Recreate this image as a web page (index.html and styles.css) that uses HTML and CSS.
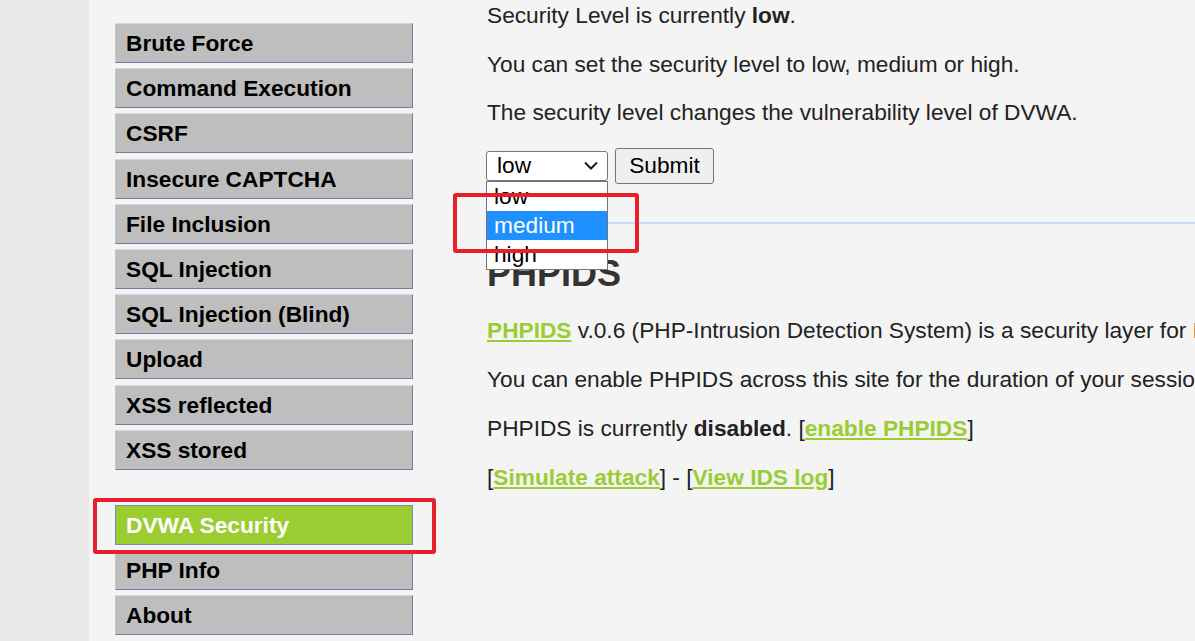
FILE: index.html
```html
<!DOCTYPE html>
<html lang="en">
<head>
<meta charset="utf-8">
<title>DVWA Security</title>
<link rel="stylesheet" href="styles.css">
</head>
<body>
<div class="page">
  <div class="strip"></div>
  <nav class="menu">
    <ul class="menu-group">
      <li class="menu-item">Brute Force</li>
      <li class="menu-item">Command Execution</li>
      <li class="menu-item">CSRF</li>
      <li class="menu-item">Insecure CAPTCHA</li>
      <li class="menu-item">File Inclusion</li>
      <li class="menu-item">SQL Injection</li>
      <li class="menu-item">SQL Injection (Blind)</li>
      <li class="menu-item">Upload</li>
      <li class="menu-item">XSS reflected</li>
      <li class="menu-item">XSS stored</li>
    </ul>
    <ul class="menu-group">
      <li class="menu-item selected">DVWA Security</li>
      <li class="menu-item">PHP Info</li>
      <li class="menu-item">About</li>
    </ul>
  </nav>
  <main class="content">
    <section class="level">
      <p>Security Level is currently <b>low</b>.</p>
      <p>You can set the security level to low, medium or high.</p>
      <p>The security level changes the vulnerability level of DVWA.</p>
      <form class="level-form">
        <div class="select">
          <span>low</span>
          <svg class="chevron" width="14" height="9" viewBox="0 0 14 9"><polyline points="1,1.5 7,7.5 13,1.5" fill="none" stroke="#1a1a1a" stroke-width="2"/></svg>
          <ul class="options">
            <li class="option">low</li>
            <li class="option active">medium</li>
            <li class="option">high</li>
          </ul>
        </div>
        <button type="button" class="submit">Submit</button>
      </form>
    </section>
    <hr class="rule">
    <section class="ids">
      <h2 class="title">PHPIDS</h2>
      <p><a class="link">PHPIDS</a> v.0.6 (PHP-Intrusion Detection System) is a security layer for PHP based web applications.</p>
      <p>You can enable PHPIDS across this site for the duration of your session.</p>
      <p>PHPIDS is currently <b>disabled</b>. [<a class="link">enable PHPIDS</a>]</p>
      <p>[<a class="link">Simulate attack</a>] - [<a class="link">View IDS log</a>]</p>
    </section>
  </main>
</div>
<div class="mark mark-menu"></div>
<div class="mark mark-select"></div>
</body>
</html>
```

FILE: styles.css
```css
html, body {
  margin: 0;
  padding: 0;
}
body {
  background: #f4f4f4;
  font-family: "Liberation Sans", Arial, sans-serif;
  overflow: hidden;
  height: 641px;
  position: relative;
}
.page {
  display: flex;
  height: 641px;
  overflow: hidden;
}
.strip {
  flex: none;
  width: 89px;
  background: #e8e8e8;
}
.menu {
  flex: none;
  width: 298px;
  margin-left: 26px;
  padding-top: 23px;
}
.menu-group {
  list-style: none;
  margin: 0;
  padding: 0;
}
.menu-group + .menu-group {
  margin-top: 35px;
}
.menu-item {
  box-sizing: border-box;
  height: 40px;
  margin-bottom: 5.2px;
  padding-left: 10px;
  background: #bebebe;
  border-top: 1px solid #d8d8d8;
  border-left: 1px solid #c6c6c6;
  border-right: 1px solid #6f7fa3;
  border-bottom: 1px solid #6f7fa3;
  font-size: 22.7px;
  line-height: 38px;
  font-weight: bold;
  color: #000;
  white-space: nowrap;
}
.menu-item.selected {
  background: #9acd32;
  color: #fff;
  border: 1px solid #7a8bb4;
}
.content {
  flex: 1;
  min-width: 0;
  margin-left: 74px;
  padding-top: 3.3px;
  color: #222;
  font-size: 22.7px;
  white-space: nowrap;
}
.content p {
  margin: 0 0 24.3px;
  line-height: 24.2px;
}
.ids p {
  margin-bottom: 24.8px;
}
.content b {
  font-weight: bold;
}
.level-form {
  display: flex;
  align-items: center;
  height: 36px;
  margin: -1px 0 0 -1px;
}
.select {
  position: relative;
  box-sizing: border-box;
  width: 122px;
  height: 30px;
  display: flex;
  align-items: center;
  justify-content: space-between;
  padding: 0 9px 0 10px;
  background: #fff;
  border: 1px solid #767676;
  border-radius: 3px;
  color: #000;
  font-size: 22.7px;
}
.chevron {
  display: block;
}
.options {
  position: absolute;
  z-index: 2;
  top: 29px;
  left: -1px;
  width: 122px;
  box-sizing: border-box;
  margin: 0;
  padding: 0;
  list-style: none;
  background: #fff;
  border: 1px solid #767676;
}
.option {
  height: 29px;
  line-height: 29px;
  padding-left: 7px;
  color: #000;
}
.option.active {
  background: #1e90ff;
  color: #fff;
}
.submit {
  box-sizing: border-box;
  width: 99px;
  height: 36px;
  margin-left: 7px;
  padding: 0;
  background: #efefef;
  border: 1px solid #767676;
  border-radius: 3px;
  font-family: "Liberation Sans", Arial, sans-serif;
  font-size: 22.7px;
  color: #000;
}
.rule {
  border: none;
  height: 2px;
  margin: 38.5px 0 0;
  background: #c9dbf6;
}
.title {
  margin: 30.5px 0 25.6px;
  font-size: 36px;
  line-height: 38px;
  font-weight: bold;
  color: #333;
}
.link {
  color: #9acd32;
  font-weight: bold;
  text-decoration: underline;
}
.mark {
  position: absolute;
  box-sizing: border-box;
  border: 4px solid #e8202c;
  border-radius: 3px;
  z-index: 5;
}
.mark-menu {
  left: 93px;
  top: 498px;
  width: 343px;
  height: 56px;
}
.mark-select {
  left: 453px;
  top: 193px;
  width: 186px;
  height: 60px;
}
```
